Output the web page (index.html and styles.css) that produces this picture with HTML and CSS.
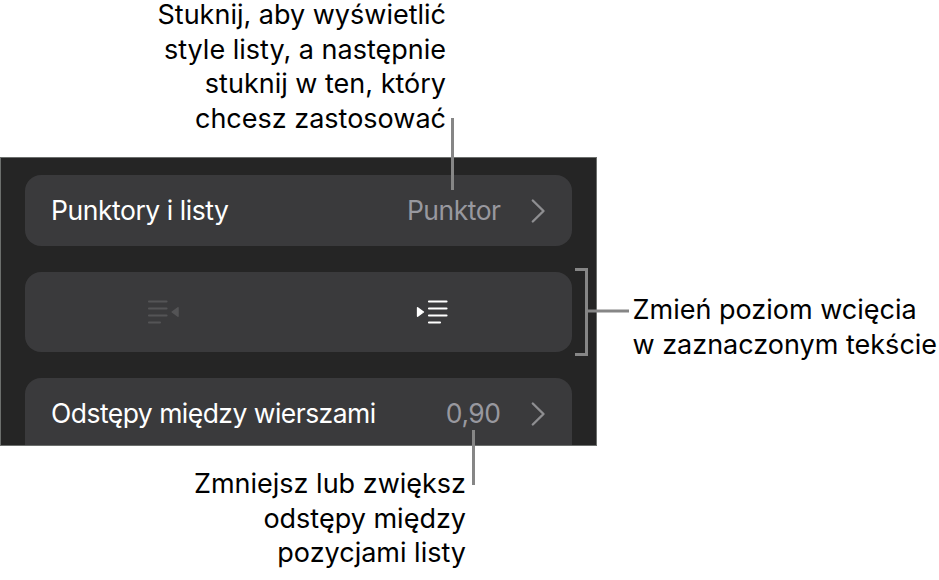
FILE: index.html
```html
<!DOCTYPE html>
<html lang="pl">
<head>
    <meta charset="UTF-8">
    <meta name="viewport" content="width=device-width, initial-scale=1.0">
    <title>Punktory i listy</title>
    <link rel="stylesheet" href="styles.css">
</head>
<body>
    <div class="figure">
        <p class="caption caption-top">Stuknij, aby wyświetlić<br>style listy, a następnie<br>stuknij w ten, który<br>chcesz zastosować</p>
        <div class="middle">
            <div class="panel">
                <div class="card row">
                    <span class="label label-lists">Punktory i listy</span>
                    <span class="value">Punktor</span>
                    <svg class="chevron" width="16" height="26" viewBox="0 0 16 26"><path d="M2.8 2.5L13.5 13L2.8 23.5"/></svg>
                </div>
                <div class="card indent">
                    <div class="half disabled">
                        <svg width="34" height="26" viewBox="0 0 34 26">
                            <path class="lines" d="M2 2.5H19.5M2 9.5H19.5M2 16.5H19.5M2 23.5H13"/>
                            <path class="arrow" d="M25.2 13L31 8.8V17.2Z"/>
                        </svg>
                    </div>
                    <div class="half">
                        <svg width="34" height="26" viewBox="0 0 34 26">
                            <path class="lines" d="M14 2.5H31.5M14 9.5H31.5M14 16.5H31.5M14 23.5H25"/>
                            <path class="arrow" d="M8.4 13L2.6 8.8V17.2Z"/>
                        </svg>
                    </div>
                </div>
                <div class="card row row-clipped">
                    <span class="label label-spacing">Odstępy między wierszami</span>
                    <span class="value">0,90</span>
                    <svg class="chevron" width="16" height="26" viewBox="0 0 16 26"><path d="M2.8 2.5L13.5 13L2.8 23.5"/></svg>
                </div>
            </div>
            <p class="caption caption-side">Zmień poziom wcięcia<br>w zaznaczonym tekście</p>
        </div>
        <p class="caption caption-bottom">Zmniejsz lub zwiększ<br>odstępy między<br>pozycjami listy</p>

        <!-- leader lines over the panel -->
        <svg class="leaders" width="939" height="580" viewBox="0 0 939 580">
            <path d="M452.5 118V190M473.5 430V485M575 269.5H586.5V354.5H575M586.5 311H629"/>
        </svg>
    </div>
</body>
</html>
```
FILE: styles.css
```css
* {
    box-sizing: border-box;
}
body {
    margin: 0;
    background-color: #fff;
    font-family: Inter, "Liberation Sans", sans-serif;
    font-size: 27px;
    color: #000;
}
.figure {
    position: relative;
    width: 939px;
    height: 580px;
    overflow: hidden;
    display: flex;
    flex-direction: column;
}
.caption {
    margin: 0;
    line-height: 34.5px;
    white-space: nowrap;
}
.caption-top {
    width: 446px;
    height: 159px;
    margin-top: -2px;
    text-align: right;
}
.middle {
    display: flex;
    height: 289px;
}
.panel {
    width: 597px;
    height: 289px;
    padding: 17px 24px 0;
    background-color: #252525;
    border: 1px solid #6c6f6d;
    overflow: hidden;
    display: flex;
    flex-direction: column;
    gap: 26px;
    font-size: 26.5px;
}
.card {
    flex: none;
    width: 547px;
    background-color: #3a3a3c;
    border-radius: 16px;
}
.row {
    height: 71px;
    padding: 0 26px 0 26px;
    display: flex;
    align-items: center;
}
.row-clipped {
    height: 101px;
    padding-bottom: 30px;
}
.label {
    color: #fff;
    padding-bottom: 2px;
}
.label-lists {
    letter-spacing: -0.45px;
}
.label-spacing {
    letter-spacing: -0.53px;
}
.value {
    margin-left: auto;
    margin-right: 29.5px;
    padding-bottom: 2px;
    color: #98989f;
    letter-spacing: -0.5px;
}
.chevron path {
    fill: none;
    stroke: #8e8e91;
    stroke-width: 2.4;
    stroke-linecap: round;
    stroke-linejoin: round;
}
.indent {
    height: 80px;
    padding: 0 6px 0 5px;
    display: flex;
}
.half {
    flex: 1;
    display: flex;
    align-items: center;
    justify-content: center;
    color: #fff;
}
.disabled {
    color: #545456;
}
.lines {
    stroke: currentColor;
    stroke-width: 2.2;
    stroke-linecap: round;
}
.arrow {
    fill: currentColor;
    stroke: currentColor;
    stroke-width: 1.5;
    stroke-linejoin: round;
}
.caption-side {
    margin-top: 136px;
    margin-left: 35.5px;
}
.caption-bottom {
    width: 466px;
    margin-top: 21px;
    text-align: right;
}
.leaders {
    position: absolute;
    top: 0;
    left: 0;
}
.leaders path {
    fill: none;
    stroke: #868686;
    stroke-width: 3;
}
```
